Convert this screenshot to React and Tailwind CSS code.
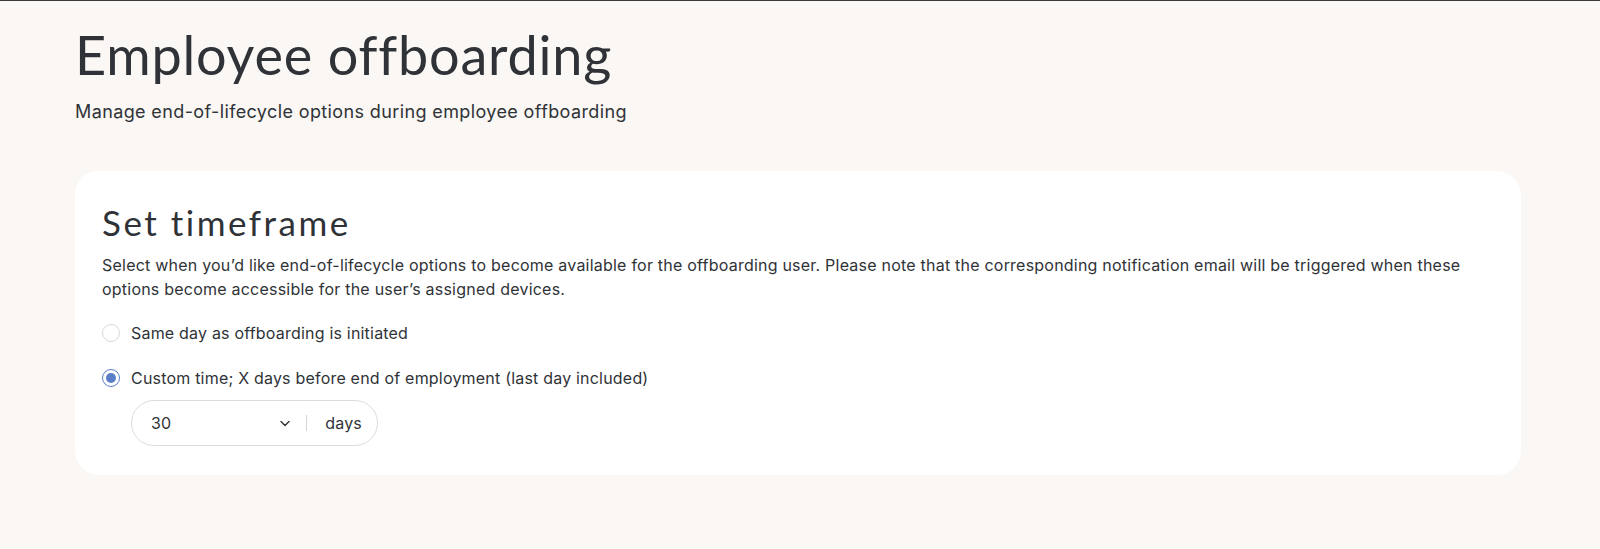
import React from "react";

export default function App() {
  return (
    <div
      className="min-h-screen bg-[#faf7f4] border-t border-[#3a3a3a] px-[75px] pt-[22px] pb-[74px] text-[#2f3337]"
      style={{ fontFamily: "Inter, 'Liberation Sans', sans-serif" }}
    >
      <h1
        className="text-[54px] leading-[64px] font-normal tracking-[0.8px]"
        style={{ fontFamily: "Lato, 'Noto Sans', sans-serif" }}
      >
        Employee offboarding
      </h1>
      <p className="mt-[13px] text-[18px] leading-6 tracking-[0.38px]">
        Manage end-of-lifecycle options during employee offboarding
      </p>

      <div className="mt-[47px] mr-[4px] rounded-[24px] bg-white pl-[27px] pr-[27px] pt-[31px] pb-[29px]">
        <h2
          className="text-[35px] leading-[40px] font-normal tracking-[2.5px]"
          style={{ fontFamily: "Lato, 'Noto Sans', sans-serif" }}
        >
          Set timeframe
        </h2>
        <p className="mt-[11px] text-[16px] leading-6 tracking-[0.22px]">
          Select when you’d like end-of-lifecycle options to become available for the offboarding user. Please note that the corresponding notification email will be triggered when these options become accessible for the user’s assigned devices.
        </p>

        <div className="mt-[20px] flex flex-col gap-[21px]">
          <label className="flex items-center gap-[11px] text-[16px] leading-6 tracking-[0.2px]">
            <span className="flex h-[18px] w-[18px] items-center justify-center rounded-full border border-[#d9d9d9] bg-white" />
            Same day as offboarding is initiated
          </label>
          <label className="flex items-center gap-[11px] text-[16px] leading-6 tracking-[0.2px]">
            <span className="flex h-[18px] w-[18px] items-center justify-center rounded-full border border-[#5b7fc6] bg-white">
              <span className="h-[10px] w-[10px] rounded-full bg-[#5b7fc6]" />
            </span>
            Custom time; X days before end of employment (last day included)
          </label>
        </div>

        <div className="mt-[10px] ml-[29px] flex h-[46px] w-[247px] items-center rounded-full border border-[#dcdcdc] pl-[19px] pr-[15px] text-[16px] tracking-[0.2px]">
          <span className="flex-1">30</span>
          <svg width="14" height="14" viewBox="0 0 14 14" fill="none" className="mr-[14px]">
            <path d="M3 5.5 L7 9.5 L11 5.5" stroke="#2f3337" strokeWidth="1.4" strokeLinecap="round" strokeLinejoin="round" />
          </svg>
          <span className="h-[16px] w-px bg-[#d6d6d6]" />
          <span className="ml-[18px]">days</span>
        </div>
      </div>
    </div>
  );
}
